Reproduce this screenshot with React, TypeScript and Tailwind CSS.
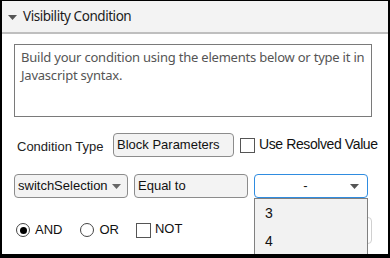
import React from 'react';

const Caret = ({ className = '' }: { className?: string }) => (
  <svg className={className} width="9" height="5" viewBox="0 0 9 5">
    <path d="M0 0h9L4.5 5z" fill="currentColor" />
  </svg>
);

export default function App() {
  return (
    <div className="w-[390px] h-[258px] bg-white border-black border-t border-l-2 border-r-2 border-b-4 overflow-hidden relative">
      {/* Header */}
      <div className="h-[33px] bg-[#f3f3f3] border-b-2 border-[#bfbfbf] flex items-center pl-[6px] gap-[6px]">
        <Caret className="text-[#555] mt-[1px]" />
        <span className="font-['Segoe_UI','Noto_Sans',sans-serif] text-[13.5px] tracking-[-0.45px] text-[#1b1b1b]">Visibility Condition</span>
      </div>

      <div className="pl-[12px] pr-[16px] pt-[10px] font-['Liberation_Sans',Arial,sans-serif]">
        {/* Expression box */}
        <div className="h-[73px] border border-[#7a7a7a] pl-[6px] pr-[1px] pt-[3px] font-['Segoe_UI','Noto_Sans',sans-serif] text-[13px] tracking-[-0.22px] leading-[18px] text-[#555]">
          Build your condition using the elements below or type it in Javascript syntax.
        </div>

        {/* Condition type */}
        <div className="mt-[16px] h-[24px] flex items-center whitespace-nowrap">
          <span className="ml-[3px] text-[13px] text-[#222] w-[96px] shrink-0 mt-[4px]">Condition Type</span>
          <div className="w-[121px] shrink-0 h-[24px] rounded-[4px] border border-[#8c8c8c] bg-[#f3f3f3] flex items-center pl-[3px] text-[13px] text-[#111]">
            Block Parameters
          </div>
          <div className="ml-[6px] shrink-0 w-[15px] h-[15px] border border-[#555] bg-white" />
          <span className="ml-[4px] text-[14px] tracking-[-0.4px] text-[#111] -mt-[1px]">Use Resolved Value</span>
        </div>

        {/* Expression row */}
        <div className="mt-[17px] h-[24px] flex items-center gap-[6px] text-[13px] text-[#111]">
          <div className="w-[114px] h-[24px] rounded-[4px] border border-[#8c8c8c] bg-[#f3f3f3] flex items-center pl-[3px] pr-[6px]">
            <span className="flex-1">switchSelection</span>
            <Caret className="text-[#666]" />
          </div>
          <div className="w-[114px] h-[24px] rounded-[4px] border border-[#8c8c8c] bg-[#f3f3f3] flex items-center pl-[3px]">
            Equal to
          </div>
          <div className="w-[114px] h-[24px] rounded-[4px] border border-[#2f8ce0] bg-white flex items-center pr-[8px]">
            <span className="flex-1 text-center pl-[6px]">-</span>
            <Caret className="text-[#555]" />
          </div>
        </div>

        {/* Logic row */}
        <div className="mt-[22px] h-[20px] flex items-center text-[13px] text-[#111]">
          <div className="ml-[2px] w-[14px] h-[14px] rounded-full border border-[#444] flex items-center justify-center">
            <div className="w-[7px] h-[7px] rounded-full bg-black" />
          </div>
          <span className="ml-[5px]">AND</span>
          <div className="ml-[18px] w-[14px] h-[14px] rounded-full border border-[#444]" />
          <span className="ml-[5px]">OR</span>
          <div className="ml-[17px] w-[15px] h-[15px] border border-[#555]" />
          <span className="ml-[4px] -mt-[3px]">NOT</span>
          <div className="ml-auto w-[60px] h-[27px] rounded-[4px] border border-[#d0d0d0] bg-white" />
        </div>
      </div>

      {/* Open dropdown list */}
      <div className="absolute left-[252px] top-[197px] w-[114px] h-[60px] bg-[#f2f2f2] border border-[#808080] font-['Liberation_Sans',Arial,sans-serif] text-[14px] text-[#111]">
        <div className="h-[28px] flex items-center pl-[10px] pt-[1px]">3</div>
        <div className="h-[28px] flex items-center pl-[10px]">4</div>
      </div>
    </div>
  );
}
